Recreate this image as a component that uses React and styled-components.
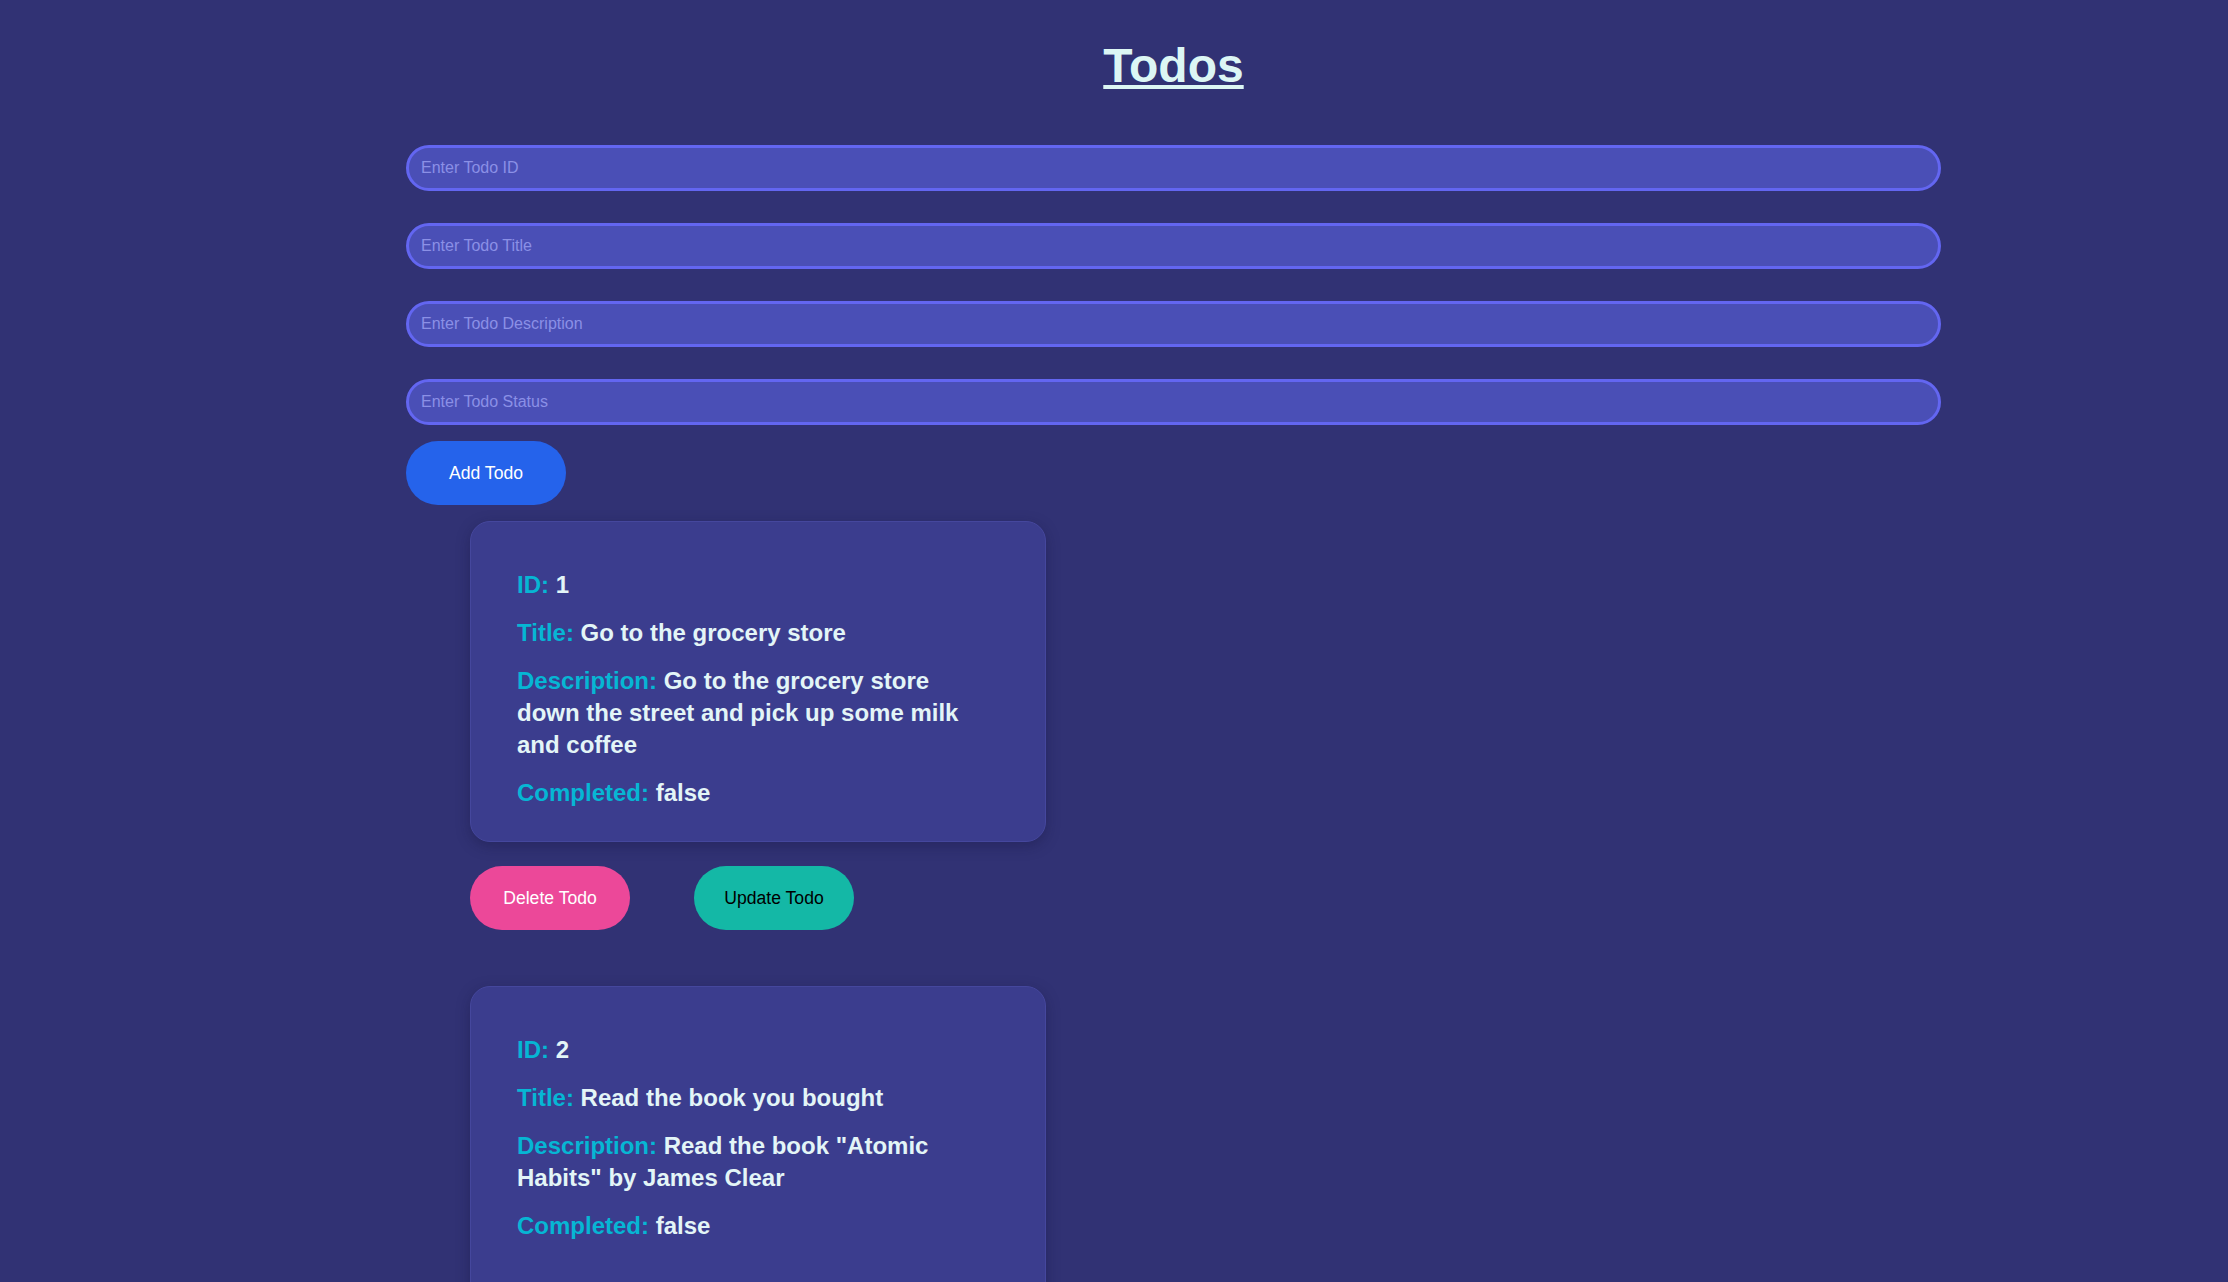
import styled, { createGlobalStyle } from 'styled-components';

const todos = [
  {
    id: 1,
    title: 'Go to the grocery store',
    description: 'Go to the grocery store down the street and pick up some milk and coffee',
    completed: false,
  },
  {
    id: 2,
    title: 'Read the book you bought',
    description: 'Read the book "Atomic Habits" by James Clear',
    completed: false,
  },
];

function App() {
  return (
    <>
      <GlobalStyle />
      <Page>
        <Heading>Todos</Heading>
        <Form onSubmit={(e) => e.preventDefault()}>
          <Fields>
            <TextInput placeholder="Enter Todo ID" />
            <TextInput placeholder="Enter Todo Title" />
            <TextInput placeholder="Enter Todo Description" />
            <TextInput placeholder="Enter Todo Status" />
          </Fields>
          <PillButton type="submit" $variant="add">Add Todo</PillButton>
        </Form>
        <TodoList>
          {todos.map((todo) => (
            <TodoItem key={todo.id}>
              <Card>
                <Field><Label>ID:</Label> {todo.id}</Field>
                <Field><Label>Title:</Label> {todo.title}</Field>
                <Field><Label>Description:</Label> {todo.description}</Field>
                <Field><Label>Completed:</Label> {String(todo.completed)}</Field>
              </Card>
              <Actions>
                <PillButton $variant="delete">Delete Todo</PillButton>
                <PillButton $variant="update">Update Todo</PillButton>
              </Actions>
            </TodoItem>
          ))}
        </TodoList>
      </Page>
    </>
  );
}

const GlobalStyle = createGlobalStyle`
  * {
    box-sizing: border-box;
  }

  body {
    margin: 0;
    background: #313274;
    font-family: "Liberation Sans", Arial, sans-serif;
  }
`;

const Page = styled.main`
  padding: 38px 287px 80px 406px;
`;

const Heading = styled.h1`
  margin: 0 0 52px;
  text-align: center;
  font-size: 48px;
  font-weight: 700;
  line-height: normal;
  color: #dcf6f4;
  text-decoration: underline;
`;

const Form = styled.form`
  display: flex;
  flex-direction: column;
  align-items: flex-start;
  gap: 16px;
`;

const Fields = styled.div`
  display: flex;
  flex-direction: column;
  gap: 32px;
  width: 100%;
`;

const TextInput = styled.input`
  width: 100%;
  height: 46px;
  padding: 0 12px;
  border: 3px solid #6366f1;
  border-radius: 999px;
  background: #4a4fb6;
  color: #e0e7ff;
  font-family: inherit;
  font-size: 16px;
  outline: none;

  &::placeholder {
    color: #8b90e6;
  }
`;

const variants = {
  add: { bg: '#2563eb', fg: '#ffffff' },
  delete: { bg: '#ec4899', fg: '#ffffff' },
  update: { bg: '#14b8a6', fg: '#000000' },
};

const PillButton = styled.button`
  width: 160px;
  height: 64px;
  border: none;
  border-radius: 999px;
  background: ${({ $variant }) => variants[$variant].bg};
  color: ${({ $variant }) => variants[$variant].fg};
  font-family: inherit;
  font-size: 17.6px;
  cursor: pointer;
`;

const TodoList = styled.section`
  display: flex;
  flex-direction: column;
  gap: 56px;
  margin: 16px 0 0 64px;
`;

const TodoItem = styled.div`
  display: flex;
  flex-direction: column;
  gap: 24px;
`;

const Card = styled.div`
  display: flex;
  flex-direction: column;
  gap: 16px;
  width: 576px;
  min-height: 320px;
  padding: 47px 56px 32px 46px;
  border: 1px solid #45479d;
  border-radius: 20px;
  background: #3b3d8e;
  box-shadow: 0 4px 14px rgba(20, 20, 60, 0.35);
`;

const Field = styled.p`
  margin: 0;
  font-size: 24px;
  font-weight: 700;
  line-height: 32px;
  color: #e3f5f7;
`;

const Label = styled.span`
  color: #06b6d4;
`;

const Actions = styled.div`
  display: flex;
  gap: 64px;
`;

export default App;
